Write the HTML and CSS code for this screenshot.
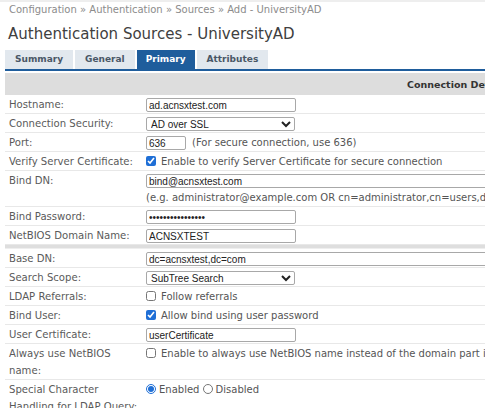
FILE: index.html
```html
<!DOCTYPE html>
<html lang="en">
<head>
    <meta charset="UTF-8">
    <title>Authentication Sources - UniversityAD</title>
    <link rel="stylesheet" href="styles.css">
</head>
<body>
    <div class="topband"></div>
    <div class="breadcrumb">Configuration &raquo; Authentication &raquo; Sources &raquo; Add - UniversityAD</div>
    <h1 class="title">Authentication Sources - UniversityAD</h1>

    <ul class="tabs">
        <li class="tab">Summary</li>
        <li class="tab">General</li>
        <li class="tab active">Primary</li>
        <li class="tab">Attributes</li>
    </ul>

    <table class="form">
        <tr class="head"><th colspan="2">Connection Details</th></tr>
        <tr>
            <td class="label">Hostname:</td>
            <td class="value"><input class="text" type="text" value="ad.acnsxtest.com"></td>
        </tr>
        <tr>
            <td class="label">Connection Security:</td>
            <td class="value">
                <select class="select">
                    <option>AD over SSL</option>
                    <option>None</option>
                    <option>StartTLS</option>
                </select>
            </td>
        </tr>
        <tr>
            <td class="label">Port:</td>
            <td class="value"><input class="text short" type="text" value="636"><span class="hint">(For secure connection, use 636)</span></td>
        </tr>
        <tr>
            <td class="label">Verify Server Certificate:</td>
            <td class="value"><label><input class="check" type="checkbox" checked>Enable to verify Server Certificate for secure connection</label></td>
        </tr>
        <tr>
            <td class="label">Bind DN:</td>
            <td class="value">
                <input class="text wide" type="text" value="bind@acnsxtest.com">
                <div class="help">(e.g. administrator@example.com OR cn=administrator,cn=users,dc=example,dc=com)</div>
            </td>
        </tr>
        <tr>
            <td class="label">Bind Password:</td>
            <td class="value"><input class="text" type="password" value="abcdefghijklmnop"></td>
        </tr>
        <tr>
            <td class="label">NetBIOS Domain Name:</td>
            <td class="value"><input class="text" type="text" value="ACNSXTEST"></td>
        </tr>
        <tr class="sep"><td colspan="2"></td></tr>
        <tr>
            <td class="label">Base DN:</td>
            <td class="value"><input class="text wide" type="text" value="dc=acnsxtest,dc=com"></td>
        </tr>
        <tr>
            <td class="label">Search Scope:</td>
            <td class="value">
                <select class="select">
                    <option>SubTree Search</option>
                    <option>One Level Search</option>
                    <option>Base Object Search</option>
                </select>
            </td>
        </tr>
        <tr>
            <td class="label">LDAP Referrals:</td>
            <td class="value"><label><input class="check" type="checkbox">Follow referrals</label></td>
        </tr>
        <tr>
            <td class="label">Bind User:</td>
            <td class="value"><label><input class="check" type="checkbox" checked>Allow bind using user password</label></td>
        </tr>
        <tr>
            <td class="label">User Certificate:</td>
            <td class="value"><input class="text" type="text" value="userCertificate"></td>
        </tr>
        <tr>
            <td class="label">Always use NetBIOS name:</td>
            <td class="value"><label><input class="check" type="checkbox">Enable to always use NetBIOS name instead of the domain part in username</label></td>
        </tr>
        <tr>
            <td class="label">Special Character Handling for LDAP Query:</td>
            <td class="value">
                <label><input class="radio" type="radio" name="special" checked>Enabled</label>
                <label><input class="radio" type="radio" name="special">Disabled</label>
            </td>
        </tr>
    </table>
</body>
</html>
```

FILE: styles.css
```css
html, body {
    overflow: hidden;
}

body {
    margin: 0;
    background: #fff;
    font-family: "DejaVu Sans", Verdana, sans-serif;
    font-size: 10px;
    color: #555;
}

.topband {
    height: 2px;
    background: #eeeeee;
}

.breadcrumb {
    margin-top: 1px;
    padding-left: 9px;
    font-size: 10px;
    line-height: 14px;
    color: #8c8c8c;
    white-space: nowrap;
}

.title {
    margin: 7px 0 6px 8px;
    font-size: 15px;
    font-weight: normal;
    line-height: 20px;
    color: #404040;
    white-space: nowrap;
}

/* tabs */
.tabs {
    list-style: none;
    display: flex;
    gap: 2px;
    margin: 0 0 0 5px;
    padding: 0;
    width: 905px;
    border-bottom: 2px solid #1f5d9c;
}

.tab {
    padding: 0 10px;
    height: 19px;
    line-height: 19px;
    background: #e2e8ee;
    color: #4a5766;
    font-size: 9px;
    font-weight: bold;
}

.tab.active {
    background: #1f5d9c;
    color: #fff;
    padding: 0 9px;
}

/* form table */
.form {
    margin: 2px 0 0 5px;
    width: 905px;
    border-collapse: collapse;
}

.form .head th {
    height: 22px;
    padding: 0;
    background: #dddddd;
    color: #333;
    font-size: 9.5px;
    font-weight: bold;
    text-align: center;
}

.form td {
    padding: 1px 4px 0;
    line-height: 17px;
    vertical-align: top;
    border-bottom: 1px solid #e8e8e8;
}

.form td.label {
    width: 133px;
    padding-right: 2px;
    font-size: 10.1px;
    color: #5a5a5a;
}

.form td.value {
    white-space: nowrap;
    color: #555;
}

.form .sep td {
    height: 3px;
    padding: 0;
    background: #dedede;
    border-top: 1px solid #d0d0d0;
    border-bottom: 1px solid #eeeeee;
}

.text,
.select {
    box-sizing: border-box;
    height: 14px;
    margin: 0;
    padding: 0 2px;
    border: 1px solid #a8a8a8;
    border-radius: 2px;
    font-family: "Liberation Sans", Arial, sans-serif;
    font-size: 10px;
    color: #222;
    vertical-align: middle;
    background: #fff;
}

.text {
    width: 150px;
}

.text.short {
    width: 40px;
}

.text.wide {
    width: 760px;
}

.select {
    width: 149px;
    padding: 0;
}

.hint {
    margin-left: 6px;
}

.help {
    line-height: 17px;
}

.check,
.radio {
    width: 10px;
    height: 10px;
    margin: 0 5px 0 0;
    vertical-align: -1px;
    accent-color: #1f6fd6;
}

.radio {
    margin-right: 3px;
}
```
